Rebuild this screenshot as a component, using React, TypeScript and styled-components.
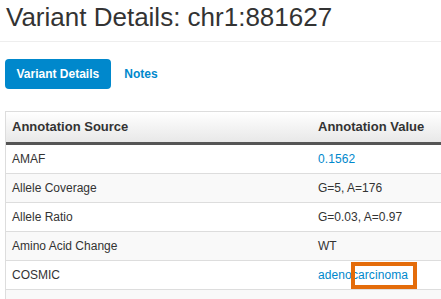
import React from "react";
import { createGlobalStyle, styled } from "styled-components";

const GlobalStyle = createGlobalStyle`
  html, body {
    margin: 0;
    padding: 0;
    background: #fff;
    overflow: hidden;
  }
  body {
    font-family: "Liberation Sans", Arial, sans-serif;
    color: #333;
  }
`;

const Page = styled.div`
  display: flex;
  flex-direction: column;
`;

const Header = styled.div`
  padding: 0 0 7px 6px;
  border-bottom: 1px solid #eee;
`;

const Title = styled.h1`
  margin: 0;
  font-size: 26px;
  line-height: 34px;
  font-weight: normal;
  color: #333;
`;

const Tabs = styled.div`
  display: flex;
  align-items: center;
  margin: 17px 0 0 5px;
`;

const Tab = styled.a<{ $active?: boolean }>`
  display: block;
  padding: 6px 11.5px;
  margin-right: 2px;
  font-size: 12px;
  font-weight: bold;
  line-height: 18px;
  border-radius: 4px;
  cursor: pointer;
  color: ${(p) => (p.$active ? "#fff" : "#0088cc")};
  background: ${(p) => (p.$active ? "#0088cc" : "transparent")};
`;

const Table = styled.table`
  margin: 22px 0 0 5px;
  width: 470px;
  border: 1px solid #ddd;
  border-collapse: separate;
  border-spacing: 0;
`;

const Th = styled.th`
  padding: 8px 6px;
  line-height: 14px;
  font-size: 13px;
  font-weight: bold;
  text-align: left;
  color: #333;
  background: linear-gradient(#ffffff, #e8e8e8);
  border-bottom: 3px solid #555;
  &:first-child {
    width: 294px;
  }
`;

const Row = styled.tr`
  &:nth-child(even) td {
    background: #f9f9f9;
  }
`;

const Td = styled.td`
  padding: 7px 6px;
  line-height: 14px;
  font-size: 12px;
  color: #333;
  background: #fff;
  border-bottom: 1px solid #ddd;
`;

const Link = styled.a`
  color: #0088cc;
  text-decoration: none;
  letter-spacing: 0.1px;
`;

const Marked = styled.span`
  position: relative;
  &::after {
    content: "";
    position: absolute;
    left: -1px;
    top: -6.5px;
    width: 66px;
    height: 27px;
    box-sizing: border-box;
    border: 4px solid #e46c0a;
    pointer-events: none;
  }
`;

const rows: { source: string; value: React.ReactNode }[] = [
  { source: "AMAF", value: <Link>0.1562</Link> },
  { source: "Allele Coverage", value: "G=5, A=176" },
  { source: "Allele Ratio", value: "G=0.03, A=0.97" },
  { source: "Amino Acid Change", value: "WT" },
  {
    source: "COSMIC",
    value: (
      <Link>
        adeno<Marked>carcinoma</Marked>
      </Link>
    ),
  },
  { source: "\u00a0", value: "\u00a0" },
];

const App = () => {
  return (
    <>
      <GlobalStyle />
      <Page>
        <Header>
          <Title>Variant Details: chr1:881627</Title>
        </Header>
        <Tabs>
          <Tab $active>Variant Details</Tab>
          <Tab>Notes</Tab>
        </Tabs>
        <Table>
          <thead>
            <tr>
              <Th>Annotation Source</Th>
              <Th>Annotation Value</Th>
            </tr>
          </thead>
          <tbody>
            {rows.map((row, i) => (
              <Row key={i}>
                <Td>{row.source}</Td>
                <Td>{row.value}</Td>
              </Row>
            ))}
          </tbody>
        </Table>
      </Page>
    </>
  );
};

export default App;
